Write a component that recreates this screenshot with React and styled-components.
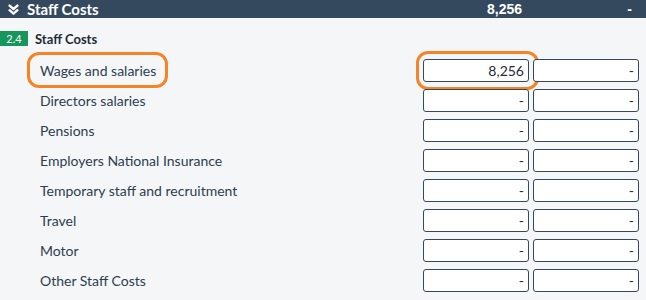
import React from 'react'
import styled, { createGlobalStyle } from 'styled-components'

const GlobalStyle = createGlobalStyle`
  html, body {
    margin: 0;
    padding: 0;
    background: #f5f6f8;
    font-family: Lato, "Open Sans", sans-serif;
  }
`

const rows = [
  { label: 'Wages and salaries', current: '8,256', prior: '-', highlight: true },
  { label: 'Directors salaries', current: '-', prior: '-' },
  { label: 'Pensions', current: '-', prior: '-' },
  { label: 'Employers National Insurance', current: '-', prior: '-' },
  { label: 'Temporary staff and recruitment', current: '-', prior: '-' },
  { label: 'Travel', current: '-', prior: '-' },
  { label: 'Motor', current: '-', prior: '-' },
  { label: 'Other Staff Costs', current: '-', prior: '-' },
]

const DoubleChevron = () => (
  <svg width="11" height="11" viewBox="0 0 11 11" fill="none" stroke="#fff" strokeWidth="2.4" strokeLinecap="round" strokeLinejoin="round">
    <polyline points="1.6,1.6 5.5,5 9.4,1.6" />
    <polyline points="1.6,6.2 5.5,9.6 9.4,6.2" />
  </svg>
)

const App = () => {
  return (
    <Page>
      <GlobalStyle />
      <HeaderBar>
        <HeaderTitle>
          <DoubleChevron />
          Staff Costs
        </HeaderTitle>
        <HeaderValue>8,256</HeaderValue>
        <HeaderValue>-</HeaderValue>
      </HeaderBar>

      <SectionHeading>
        <Badge>2.4</Badge>
        <SectionTitle>Staff Costs</SectionTitle>
      </SectionHeading>

      <RowList>
        {rows.map((r) => (
          <Row key={r.label}>
            <Label $marked={r.highlight}>{r.label}</Label>
            <Field $marked={r.highlight}>
              <ValueInput readOnly value={r.current} />
            </Field>
            <Field>
              <ValueInput readOnly value={r.prior} />
            </Field>
          </Row>
        ))}
      </RowList>
    </Page>
  )
}

const Page = styled.div`
  width: 646px;
  height: 300px;
  overflow: hidden;
  background: #f5f6f8;
`

const HeaderBar = styled.div`
  display: grid;
  grid-template-columns: 1fr 110px 110px;
  align-items: center;
  height: 18px;
  background: #34495e;
  color: #fff;
  padding: 0 14px 0 8px;
`

const HeaderTitle = styled.div`
  display: flex;
  align-items: center;
  gap: 8px;
  font-weight: 700;
  font-size: 15px;
  line-height: 18px;
`

const HeaderValue = styled.div`
  text-align: right;
  font-family: "Liberation Sans", Arial, sans-serif;
  font-weight: 700;
  font-size: 14px;
  line-height: 18px;
`

const SectionHeading = styled.div`
  display: flex;
  align-items: center;
  gap: 7px;
  margin-top: 13px;
  height: 15px;
`

const Badge = styled.span`
  display: inline-flex;
  align-items: center;
  justify-content: center;
  width: 28px;
  height: 15px;
  background: #16965a;
  color: #fff;
  font-size: 11px;
`

const SectionTitle = styled.span`
  font-weight: 700;
  font-size: 13px;
  color: #1f2b36;
`

const RowList = styled.div`
  display: flex;
  flex-direction: column;
  margin-top: 9px;
`

const Row = styled.div`
  display: grid;
  grid-template-columns: 1fr 106px 106px;
  column-gap: 4px;
  align-items: center;
  height: 30px;
  padding: 0 7px 0 40px;
`

const Label = styled.span`
  position: relative;
  justify-self: start;
  font-size: 14px;
  color: #2c3e50;

  ${(p) => p.$marked && `
    &::after {
      content: '';
      position: absolute;
      left: -13px;
      right: -12px;
      top: -10px;
      bottom: -9px;
      border: 3.5px solid #f58426;
      border-radius: 12px;
      pointer-events: none;
    }
  `}
`

const Field = styled.div`
  position: relative;
  height: 23px;

  ${(p) => p.$marked && `
    &::after {
      content: '';
      position: absolute;
      left: -7px;
      right: -10px;
      top: -8px;
      bottom: -8px;
      border: 3.5px solid #f58426;
      border-radius: 12px;
      pointer-events: none;
    }
  `}
`

const ValueInput = styled.input`
  box-sizing: border-box;
  width: 100%;
  height: 23px;
  border: 1px solid #34495e;
  border-radius: 3px;
  background: #fff;
  padding: 0 4px;
  text-align: right;
  font-family: Lato, sans-serif;
  font-size: 14px;
  color: #1f2b36;
  outline: none;
`

export default App
